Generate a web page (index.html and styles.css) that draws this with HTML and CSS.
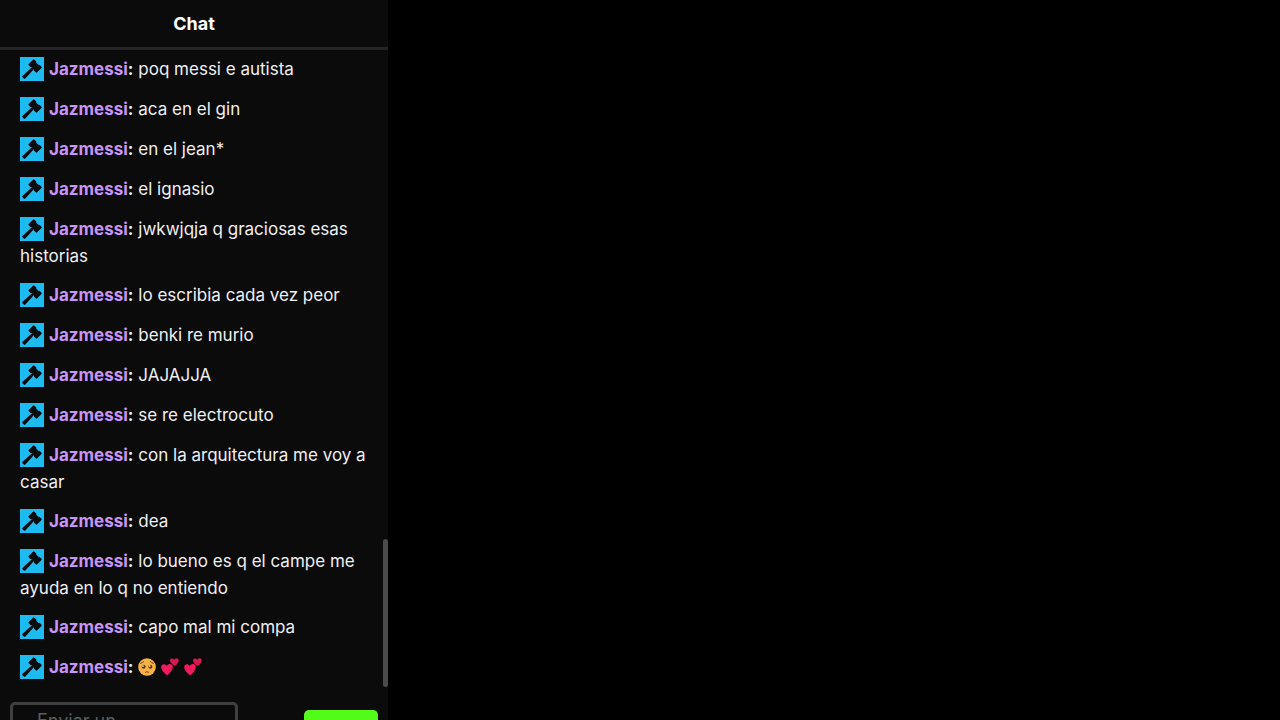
FILE: index.html
```html
<!DOCTYPE html>
<html lang="es">
  <head>
    <meta charset="UTF-8" />
    <meta name="viewport" content="width=device-width, initial-scale=1.0" />
    <title>Chat</title>
    <link rel="stylesheet" href="styles.css">
  </head>
  <body>
    <!-- Shared icons -->
    <svg class="sprite" aria-hidden="true">
      <symbol id="gavel" viewBox="0 0 24 24">
        <g transform="translate(15.1 9) rotate(45)">
          <rect x="-4" y="-3.2" width="8" height="6.4" />
          <rect x="-6" y="-4" width="4.4" height="8" rx="1" />
          <rect x="1.6" y="-4" width="4.4" height="8" rx="1" />
          <path d="M-1.4 3H1.4L2 16.4Q0 17.6-2 16.4Z" />
        </g>
      </symbol>
      <symbol id="hearts" viewBox="0 0 18 18">
        <path fill="#f01a5c" d="M6.2 17.5C3.4 15.4 0 12 .2 8.8C.4 6.2 3.6 5 5.8 7.8C7.8 4.8 11.8 5.6 11.8 8.8C11.8 12 8.8 15.4 6.2 17.5Z" />
        <path fill="#d8184f" d="M13.8 8C11.6 6.8 8.9 4.6 9 2.4C9.2.2 11.8-.2 13.2 1.7C14.4-.6 17.6-.3 17.7 2.2C17.7 4.5 15.6 6.8 13.8 8Z" />
      </symbol>
      <symbol id="pleading" viewBox="0 0 18 18">
        <circle cx="9" cy="9" r="8.8" fill="#f6b344" />
        <circle cx="5.6" cy="8.8" r="2" fill="#65331b" />
        <circle cx="12.4" cy="8.8" r="2" fill="#65331b" />
        <circle cx="5" cy="8.1" r=".8" fill="#fff" />
        <circle cx="11.8" cy="8.1" r=".8" fill="#fff" />
        <path d="M2.6 5.4Q4.4 5 5.8 3.6M12.2 3.6Q13.6 5 15.4 5.4M7.4 14.2Q9 13 10.6 14.2" fill="none" stroke="#7a4220" stroke-width="1" stroke-linecap="round" />
      </symbol>
    </svg>

    <aside class="chat">
      <header class="chat-header">
        <h1>Chat</h1>
      </header>

      <div class="chat-body">
        <ul class="messages">
          <li><svg class="badge"><use href="#gavel" /></svg><b class="user">Jazmessi</b><b>:</b> poq messi e autista</li>
          <li><svg class="badge"><use href="#gavel" /></svg><b class="user">Jazmessi</b><b>:</b> aca en el gin</li>
          <li><svg class="badge"><use href="#gavel" /></svg><b class="user">Jazmessi</b><b>:</b> en el jean*</li>
          <li><svg class="badge"><use href="#gavel" /></svg><b class="user">Jazmessi</b><b>:</b> el ignasio</li>
          <li><svg class="badge"><use href="#gavel" /></svg><b class="user">Jazmessi</b><b>:</b> jwkwjqja q graciosas esas historias</li>
          <li><svg class="badge"><use href="#gavel" /></svg><b class="user">Jazmessi</b><b>:</b> lo escribia cada vez peor</li>
          <li><svg class="badge"><use href="#gavel" /></svg><b class="user">Jazmessi</b><b>:</b> benki re murio</li>
          <li><svg class="badge"><use href="#gavel" /></svg><b class="user">Jazmessi</b><b>:</b> JAJAJJA</li>
          <li><svg class="badge"><use href="#gavel" /></svg><b class="user">Jazmessi</b><b>:</b> se re electrocuto</li>
          <li><svg class="badge"><use href="#gavel" /></svg><b class="user">Jazmessi</b><b>:</b> con la arquitectura me voy a casar</li>
          <li><svg class="badge"><use href="#gavel" /></svg><b class="user">Jazmessi</b><b>:</b> dea</li>
          <li><svg class="badge"><use href="#gavel" /></svg><b class="user">Jazmessi</b><b>:</b> lo bueno es q el campe me ayuda en lo q no entiendo</li>
          <li><svg class="badge"><use href="#gavel" /></svg><b class="user">Jazmessi</b><b>:</b> capo mal mi compa</li>
          <li><svg class="badge"><use href="#gavel" /></svg><b class="user">Jazmessi</b><b>:</b> <svg class="emoji"><use href="#pleading" /></svg><svg class="emoji"><use href="#hearts" /></svg><svg class="emoji"><use href="#hearts" /></svg></li>
        </ul>
        <div class="scroll-thumb"></div>
      </div>

      <form class="chat-form">
        <textarea class="chat-input" rows="2" placeholder="Enviar un" aria-label="Enviar un"></textarea>
        <button class="send" type="button"></button>
      </form>
    </aside>
  </body>
</html>
```

FILE: styles.css
```css
* {
  box-sizing: border-box;
}

body {
  margin: 0;
  height: 100vh;
  overflow: hidden;
  background-color: #000;
  color: #efeff1;
  font-family: "Inter", sans-serif;
  font-size: 17px;
  line-height: 26px;
}

.sprite {
  position: absolute;
  width: 0;
  height: 0;
}

.chat {
  width: 388px;
  max-width: 100%;
  background-color: #0b0b0b;
}

.chat-header {
  padding: 10px 0;
  border-bottom: 3px solid #252527;
  text-align: center;
}

.chat-header h1 {
  margin: 0;
  color: #fff;
  font-size: 18px;
  font-weight: 700;
  line-height: 27px;
}

.chat-body {
  position: relative;
  padding: 6px 20px 11px;
}

.messages {
  display: grid;
  gap: 13px;
  margin: 0;
  padding: 0;
  list-style: none;
}

.badge {
  width: 24px;
  height: 24px;
  margin: 0 5px 2px 0;
  background-color: #1cbcf2;
  fill: #070b0d;
  vertical-align: -8px;
}

.user {
  color: #c894f8;
}

.emoji {
  width: 18px;
  height: 18px;
  margin-right: 5px;
  vertical-align: -3px;
}

.scroll-thumb {
  position: absolute;
  right: 0;
  bottom: 5px;
  width: 5px;
  height: 148px;
  border-radius: 3px;
  background-color: #4b4b4b;
}

.chat-form {
  display: flex;
  justify-content: space-between;
  align-items: center;
  padding: 10px;
}

.chat-input {
  width: 228px;
  padding: 3px 24px;
  border: 3px solid #3f3f42;
  border-radius: 5px;
  background-color: transparent;
  color: #efeff1;
  font: inherit;
  font-size: 18px;
  resize: none;
}

.chat-input::placeholder {
  color: #56605e;
}

.send {
  width: 74px;
  height: 48px;
  border: none;
  border-radius: 5px;
  background-color: #53fc18;
}
```
